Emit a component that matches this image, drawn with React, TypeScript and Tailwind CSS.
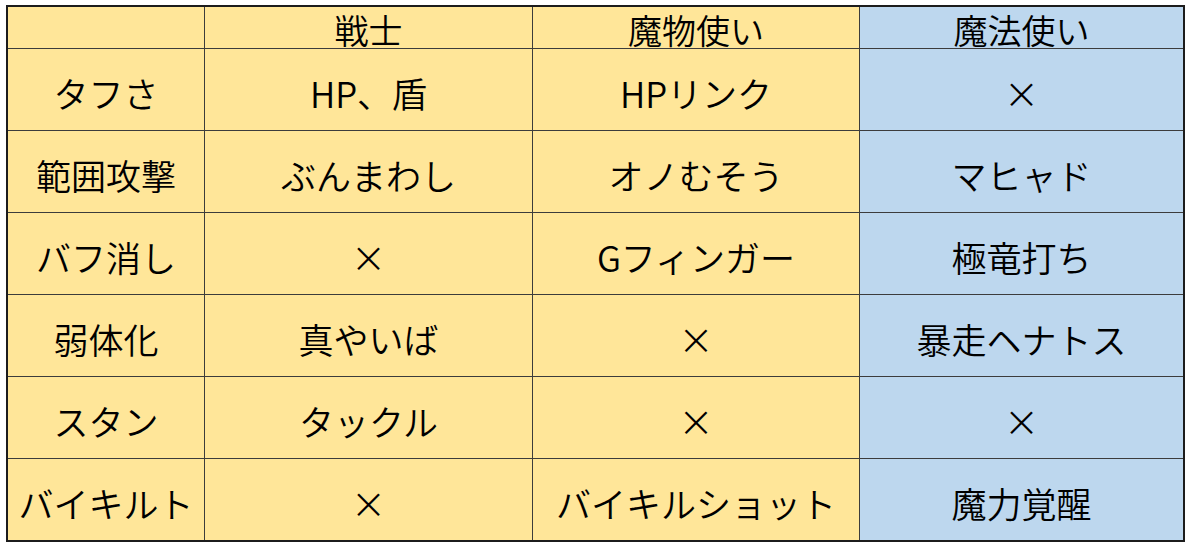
import React from "react";

const header = ["", "戦士", "魔物使い", "魔法使い"];
const rows: string[][] = [
  ["タフさ", "HP、盾", "HPリンク", "×"],
  ["範囲攻撃", "ぶんまわし", "オノむそう", "マヒャド"],
  ["バフ消し", "×", "Gフィンガー", "極竜打ち"],
  ["弱体化", "真やいば", "×", "暴走ヘナトス"],
  ["スタン", "タックル", "×", "×"],
  ["バイキルト", "×", "バイキルショット", "魔力覚醒"],
];

export default function App() {
  return (
    <div className="w-[1200px] h-[560px] bg-white relative">
      <div
        className="absolute left-[6px] top-[5px] border-2 border-[#1c1c1c] grid grid-cols-[196px_327px_326px_323px] grid-rows-[41px_repeat(6,81px)] gap-px bg-[#3c3c3c] text-black font-[350]"
        style={{ fontFamily: '"Noto Sans CJK JP", "Noto Sans", sans-serif' }}
      >
        {header.map((h, i) => (
          <div
            key={"h" + i}
            className={`flex items-center justify-center text-[34px] leading-none pt-[4px] ${i === 3 ? "bg-[#bdd7ee]" : "bg-[#ffe699]"}`}
          >
            {h}
          </div>
        ))}
        {rows.map((r, ri) =>
          r.map((c, ci) => (
            <div
              key={ri + "-" + ci}
              className={`flex items-center justify-center text-[35px] leading-none pt-[5px] whitespace-nowrap ${ci === 3 ? "bg-[#bdd7ee]" : "bg-[#ffe699]"}`}
            >
              {c}
            </div>
          ))
        )}
      </div>
    </div>
  );
}
